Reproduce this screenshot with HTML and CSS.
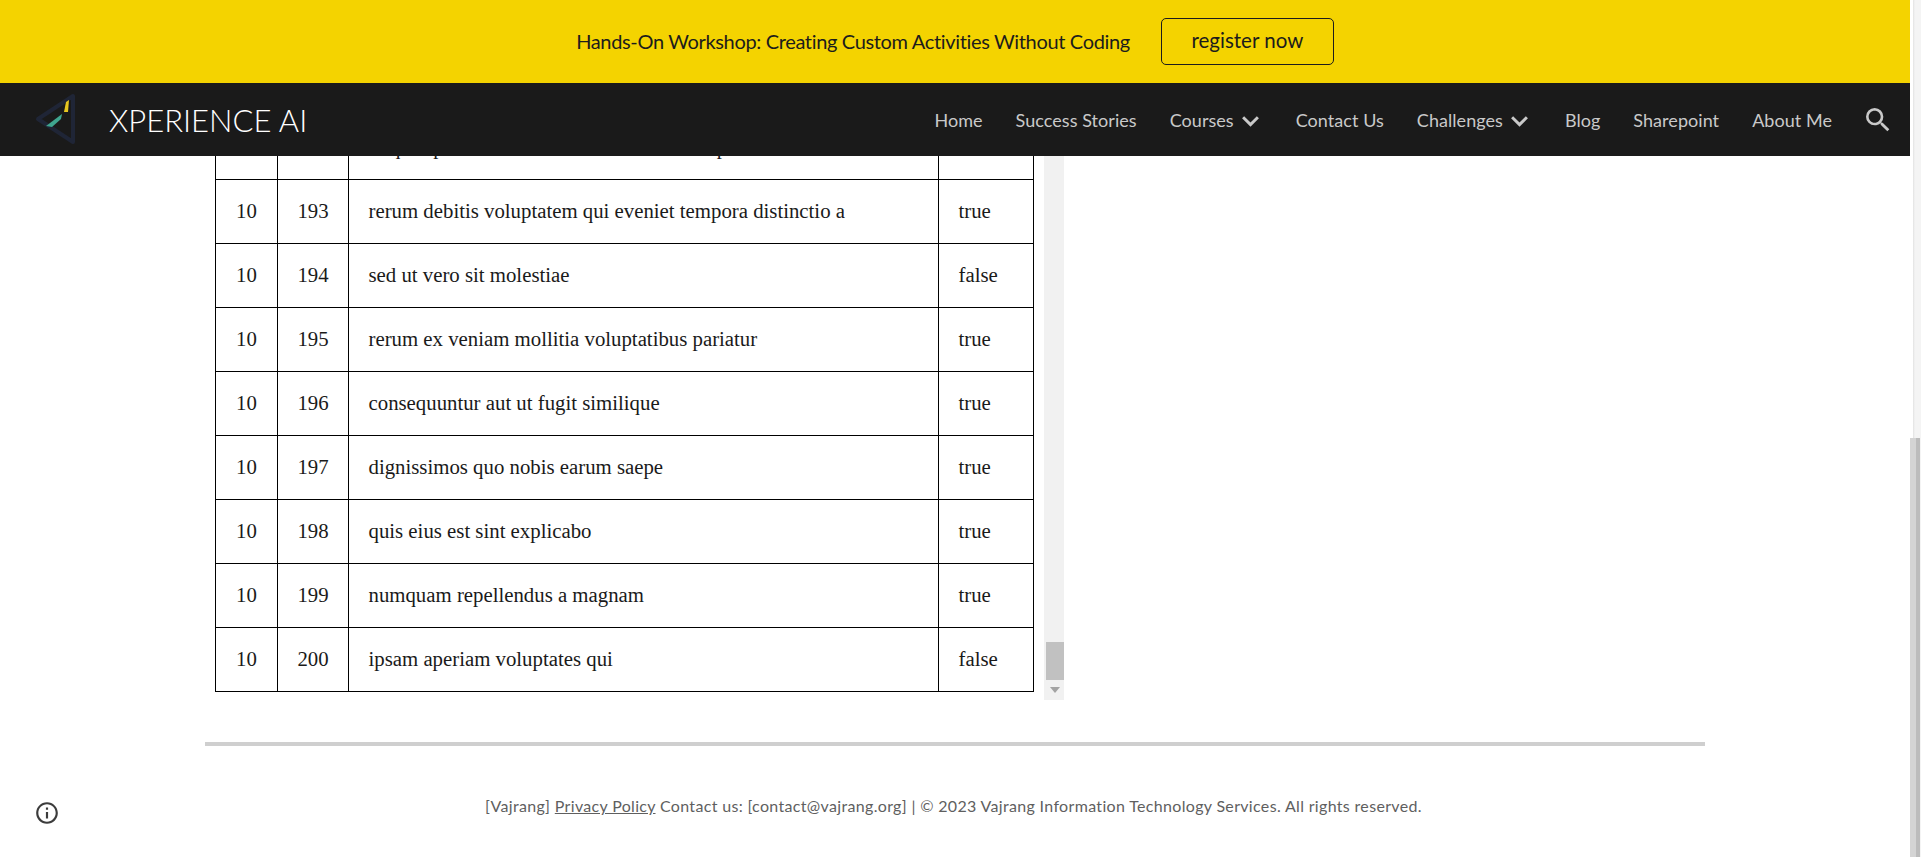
FILE: index.html
```html
<!DOCTYPE html>
<html>
<head>
    <title>XPERIENCE AI</title>
    <link rel="stylesheet" href="styles.css">
</head>
<body>
    <div class="page">
        <header class="top">
            <div class="banner">
                <span class="banner-text">Hands-On Workshop: Creating Custom Activities Without Coding</span>
                <a class="register" href="#">register now</a>
            </div>
            <nav class="nav">
                <a class="brand" href="#">
                    <svg class="logo" viewBox="0 0 50 56" width="50" height="56">
                        <path d="M3 27 L38 4 L38 50 Z" fill="none" stroke="#1f2536" stroke-width="4" stroke-linejoin="round"/>
                        <path d="M11 34 L27 22 L26 27 L17 35 Z" fill="#3fa58f"/>
                        <path d="M29 20 L31 10 L34 8 L33 20 Z" fill="#e6c620"/>
                    </svg>
                    <span class="brand-name">XPERIENCE AI</span>
                </a>
                <div class="links">
                    <a href="#">Home</a>
                    <a href="#">Success Stories</a>
                    <a class="has-sub" href="#">Courses <svg class="chev" viewBox="0 0 18 12" width="19" height="13"><path d="M2 2 L9 9 L16 2" fill="none" stroke="currentColor" stroke-width="2.8"/></svg></a>
                    <a href="#">Contact Us</a>
                    <a class="has-sub" href="#">Challenges <svg class="chev" viewBox="0 0 18 12" width="19" height="13"><path d="M2 2 L9 9 L16 2" fill="none" stroke="currentColor" stroke-width="2.8"/></svg></a>
                    <a href="#">Blog</a>
                    <a href="#">Sharepoint</a>
                    <a href="#">About Me</a>
                </div>
                <svg class="search" viewBox="0 0 24 24" width="32" height="32">
                    <path d="M15.5 14h-.79l-.28-.27A6.47 6.47 0 0 0 16 9.5 6.5 6.5 0 1 0 9.5 16c1.61 0 3.09-.59 4.23-1.57l.27.28v.79l5 4.99L20.49 19l-4.99-5zm-6 0C7.01 14 5 11.99 5 9.5S7.01 5 9.5 5 14 7.01 14 9.5 11.99 14 9.5 14z" fill="currentColor"/>
                </svg>
            </nav>
        </header>

        <main class="content">
            <div class="frame">
                <table class="todos">
                    <colgroup>
                        <col class="c-user"><col class="c-id"><col class="c-title"><col class="c-done">
                    </colgroup>
                    <tr><td class="num">10</td><td class="num">192</td><td>ut quas possimus exercitationem sint voluptates</td><td>false</td></tr>
                    <tr><td class="num">10</td><td class="num">193</td><td>rerum debitis voluptatem qui eveniet tempora distinctio a</td><td>true</td></tr>
                    <tr><td class="num">10</td><td class="num">194</td><td>sed ut vero sit molestiae</td><td>false</td></tr>
                    <tr><td class="num">10</td><td class="num">195</td><td>rerum ex veniam mollitia voluptatibus pariatur</td><td>true</td></tr>
                    <tr><td class="num">10</td><td class="num">196</td><td>consequuntur aut ut fugit similique</td><td>true</td></tr>
                    <tr><td class="num">10</td><td class="num">197</td><td>dignissimos quo nobis earum saepe</td><td>true</td></tr>
                    <tr><td class="num">10</td><td class="num">198</td><td>quis eius est sint explicabo</td><td>true</td></tr>
                    <tr><td class="num">10</td><td class="num">199</td><td>numquam repellendus a magnam</td><td>true</td></tr>
                    <tr><td class="num">10</td><td class="num">200</td><td>ipsam aperiam voluptates qui</td><td>false</td></tr>
                </table>
                <div class="frame-bar">
                    <div class="frame-thumb"></div>
                    <div class="frame-arrow"></div>
                </div>
            </div>
            <hr class="rule">
            <footer class="foot">
                [Vajrang] <a href="#">Privacy Policy</a> Contact us: [contact@vajrang.org] | © 2023 Vajrang Information Technology Services. All rights reserved.
            </footer>
        </main>

        <svg class="info" viewBox="0 0 24 24" width="26" height="26">
            <path d="M11 7h2v2h-2zm0 4h2v6h-2zm1-9C6.48 2 2 6.48 2 12s4.48 10 10 10 10-4.48 10-10S17.52 2 12 2zm0 18c-4.41 0-8-3.59-8-8s3.59-8 8-8 8 3.59 8 8-3.59 8-8 8z" fill="currentColor"/>
        </svg>
    </div>
    <div class="page-bar">
        <div class="page-thumb"></div>
    </div>
</body>
</html>
```

FILE: styles.css
```css
html, body {
    margin: 0;
    height: 857px;
    overflow: hidden;
    background: white;
}
body {
    display: flex;
    font-family: Lato, sans-serif;
}
a {
    color: inherit;
    text-decoration: none;
}
.page {
    position: relative;
    flex: 1;
    height: 857px;
    overflow: hidden;
}

/* header sits over the scrolled content */
.top {
    position: absolute;
    top: 0;
    left: 0;
    right: 0;
    z-index: 2;
}
.banner {
    height: 83px;
    background: #f4d300;
    color: #1c1c1c;
    display: flex;
    align-items: center;
    justify-content: center;
    gap: 31px;
}
.banner-text {
    font-size: 20px;
    letter-spacing: -0.34px;
    margin-bottom: 2px;
}
.register {
    width: 173px;
    height: 47px;
    box-sizing: border-box;
    border: 1px solid #1c1c1c;
    border-radius: 5px;
    display: flex;
    align-items: center;
    justify-content: center;
    margin-top: -1px;
    padding-bottom: 2px;
    font-size: 20.5px;
}
.nav {
    height: 73px;
    background: #1a1a1a;
    color: #c9c9c9;
    display: flex;
    align-items: center;
    padding: 0 16px 0 35px;
}
.brand {
    display: flex;
    align-items: center;
    gap: 24px;
    color: white;
}
.brand-name {
    font-size: 31px;
    font-weight: 300;
}
.links {
    margin-left: auto;
    display: flex;
    align-items: center;
    gap: 33px;
    font-size: 18px;
    letter-spacing: 0.05px;
}
.links a {
    display: flex;
    align-items: center;
    gap: 7px;
}
.links .has-sub {
    margin-right: 3px;
}
.chev {
    margin-top: 3px;
}
.search {
    margin-left: 30px;
}

.content {
    padding: 115px 205px 0;
}
.frame {
    display: flex;
    align-items: flex-start;
    padding-left: 10px;
    gap: 10px;
}
.todos {
    border-collapse: collapse;
    table-layout: fixed;
    width: 818px;
    font-family: "Liberation Serif", serif;
    font-size: 20.8px;
    color: #1a1a1a;
}
.c-user { width: 62px; }
.c-id { width: 71px; }
.c-title { width: 590px; }
.c-done { width: 95px; }
.todos td {
    height: 61px;
    padding: 0 19.5px 2px;
    border: 1px solid black;
}
.todos td.num {
    padding: 0 0 2px;
    text-align: center;
}
.frame-bar {
    width: 20px;
    height: 585px;
    background: #f1f1f1;
    display: flex;
    flex-direction: column;
    align-items: flex-end;
    justify-content: flex-end;
}
.frame-thumb {
    width: 18px;
    height: 38px;
    margin-bottom: 7px;
    background: #c1c1c1;
}
.frame-arrow {
    width: 0;
    height: 0;
    border-left: 5px solid transparent;
    border-right: 5px solid transparent;
    border-top: 6px solid #a3a3a3;
    margin: 0 4px 7px 0;
}
.rule {
    margin: 42px 0 0;
    height: 4px;
    border: 0;
    background: #cfcfcf;
}
.foot {
    margin-top: 50px;
    padding-right: 3px;
    text-align: center;
    font-size: 16px;
    letter-spacing: 0.33px;
    color: #5f5f5f;
}
.foot a {
    text-decoration: underline;
}
.info {
    position: absolute;
    left: 34px;
    top: 800px;
    color: #3c3c3c;
}

.page-bar {
    width: 11px;
    height: 857px;
    display: flex;
    flex-direction: column;
    justify-content: flex-end;
    background: linear-gradient(to right, white 3px, #e2e2e2 3px, #f4f4f4 5px);
}
.page-thumb {
    width: 10px;
    height: 419px;
    background: linear-gradient(to right, #d4d4d4 60%, #bcbcbc 60%);
}
```
